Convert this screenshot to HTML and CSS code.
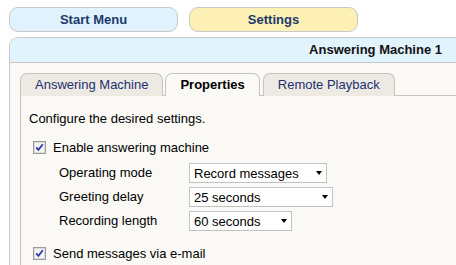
FILE: index.html
```html
<!DOCTYPE html>
<html lang="en">
<head>
<meta charset="UTF-8" />
<title>Answering Machine 1</title>
<link rel="stylesheet" href="styles.css">
</head>
<body>

<div class="topnav">
  <a class="navbtn navbtn-start">Start Menu</a>
  <a class="navbtn navbtn-settings">Settings</a>
</div>

<div class="panel">
  <div class="panel-head">Answering Machine 1</div>
  <div class="panel-body">
    <ul class="tabs">
      <li class="tab">Answering Machine</li>
      <li class="tab active">Properties</li>
      <li class="tab">Remote Playback</li>
    </ul>
    <div class="tab-content">
      <p class="intro">Configure the desired settings.</p>

      <label class="check">
        <svg class="box" width="13" height="13" viewBox="0 0 13 13">
          <rect x="0.5" y="0.5" width="12" height="12" fill="#e9e9e9" stroke="#9a9a9a"/>
          <rect x="1.5" y="1.5" width="10" height="10" fill="#f4f4f4" stroke="#dcdcdc"/>
          <path d="M3.2 6.4 L5.4 8.8 L9.8 3.2" fill="none" stroke="#2b3aa8" stroke-width="1.8"/>
        </svg>
        Enable answering machine
      </label>

      <div class="fields">
        <span class="field-label">Operating mode</span>
        <span class="select sel-mode">
          <select><option>Record messages</option><option>Announcement only</option></select>
        </span>
        <span class="field-label">Greeting delay</span>
        <span class="select sel-delay">
          <select><option>25 seconds</option><option>0 seconds</option></select>
        </span>
        <span class="field-label">Recording length</span>
        <span class="select sel-length">
          <select><option>60 seconds</option><option>120 seconds</option></select>
        </span>
      </div>

      <label class="check">
        <svg class="box" width="13" height="13" viewBox="0 0 13 13">
          <rect x="0.5" y="0.5" width="12" height="12" fill="#e9e9e9" stroke="#9a9a9a"/>
          <rect x="1.5" y="1.5" width="10" height="10" fill="#f4f4f4" stroke="#dcdcdc"/>
          <path d="M3.2 6.4 L5.4 8.8 L9.8 3.2" fill="none" stroke="#2b3aa8" stroke-width="1.8"/>
        </svg>
        Send messages via e-mail
      </label>
    </div>
  </div>
</div>

</body>
</html>
```

FILE: styles.css
```css
body { margin: 0; background: #fff; font-family: "Liberation Sans", Arial, sans-serif; font-size: 13px; color: #000; overflow: hidden; }

.topnav { display: flex; gap: 11px; padding: 7px 0 0 9px; }
.navbtn { box-sizing: border-box; width: 169px; height: 25px; line-height: 23px; border: 1px solid #c8c8c8; border-radius: 9px; text-align: center; font-weight: bold; color: #1b3a6b; }
.navbtn-start { background: #e0f2fd; }
.navbtn-settings { background: #fdf0b4; }

.panel { margin: 5px 0 0 9px; border: 1px solid #c6c6c6; border-right: none; border-bottom: none; border-radius: 9px 0 0 0; background: #faf9f5; }
.panel-head { height: 24px; line-height: 24px; background: #e1f3fd; border-bottom: 1px solid #c6c6c6; border-radius: 8px 0 0 0; text-align: right; padding-right: 14px; font-weight: bold; color: #111; }
.panel-body { padding: 10px 0 0 10px; }

.tabs { display: flex; gap: 2px; margin: 0; padding: 0; list-style: none; height: 22px; }
.tab { box-sizing: border-box; height: 23px; line-height: 21px; padding: 0 14px; border: 1px solid #c4c4c4; border-bottom: none; border-radius: 7px 7px 0 0; background: #eceae3; color: #1e2f6e; }
.tab.active { background: #faf9f5; color: #000; font-weight: bold; position: relative; z-index: 1; }
.tab:last-child { margin-left: 1px; }

.tab-content { border-top: 1px solid #c4c4c4; border-left: 1px solid #c4c4c4; padding: 15px 0 4px 8px; }
.intro { margin: 0; line-height: 16px; }

.check { display: flex; align-items: center; gap: 7px; height: 16px; margin: 12px 0 0 4px; }
.box { display: block; flex: none; }

.fields { display: grid; grid-template-columns: 130px auto; grid-auto-rows: 24px; align-items: center; margin: 6px 0 0 30px; }
.field-label { line-height: 16px; }

.select { position: relative; display: block; height: 20px; }
.select select { appearance: none; -webkit-appearance: none; box-sizing: border-box; width: 100%; height: 20px; margin: 0; padding: 0 0 0 4px; border: 1px solid #c2c2c2; border-radius: 0; background: #fff; font: inherit; color: #000; }
.select::after { content: ""; position: absolute; right: 5px; top: 8px; border-left: 3.5px solid transparent; border-right: 3.5px solid transparent; border-top: 4px solid #000; }
.sel-mode { width: 138px; }
.sel-delay { width: 144px; }
.sel-length { width: 103px; }
```
